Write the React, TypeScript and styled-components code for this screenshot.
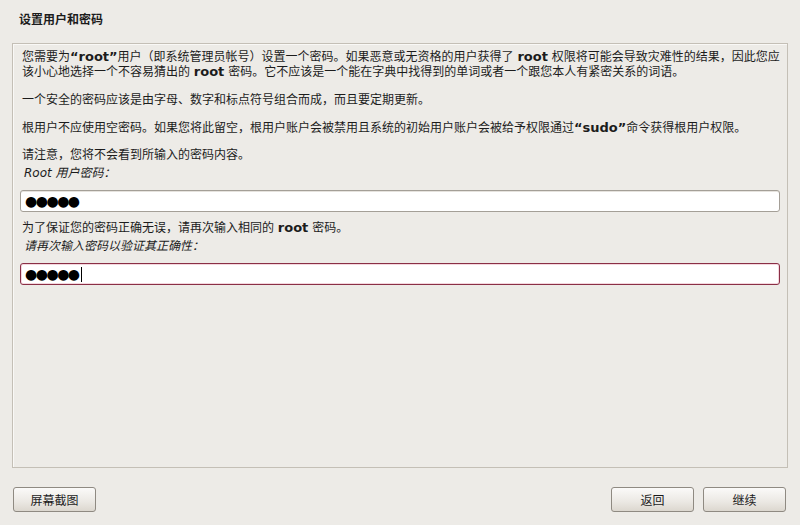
import styled, { createGlobalStyle } from "styled-components";

const GlobalStyle = createGlobalStyle`
  html, body {
    margin: 0;
    padding: 0;
    background: #edebe7;
  }
  * {
    box-sizing: border-box;
  }
`;

const Screen = styled.div`
  width: 800px;
  height: 525px;
  background: #edebe7;
  display: flex;
  flex-direction: column;
  font-family: "DejaVu Sans", "Noto Sans CJK SC", sans-serif;
  font-size: 12px;
  color: #1c1c1c;
  overflow: hidden;
`;

const Title = styled.div`
  height: 43px;
  padding: 10px 0 0 19px;
  font-weight: bold;
  font-size: 12px;
`;

const Panel = styled.div`
  margin: 0 12px;
  height: 425px;
  border: 1px solid #c4bfb6;
  box-shadow: inset 1px 1px 0 #f9f8f6;
  padding: 5px 7px 0 7px;
  display: flex;
  flex-direction: column;
`;

const Para = styled.div<{ $gap?: number }>`
  padding-left: 2px;
  line-height: 15px;
  margin-bottom: ${({ $gap }) => $gap}px;
  white-space: nowrap;
`;

const Line = styled.div`
  height: 15px;
`;

const Strong = styled.b`
  font-weight: bold;
  font-size: 13px;
  line-height: 15px;
`;

const Label = styled.div`
  padding-left: 4px;
  height: 15px;
  line-height: 15px;
  font-style: italic;
  margin-bottom: 9px;
`;

const Field = styled.div<{ $focus?: boolean }>`
  height: 22px;
  width: 760px;
  background: #fff;
  border: 1px solid ${({ $focus }) => ($focus ? "#8a2f46" : "#a49f97")};
  border-radius: 3px;
  box-shadow: ${({ $focus }) =>
    $focus ? "inset 0 0 0 1px #f4d7de" : "inset 0 1px 0 #e6e3de"};
  padding-left: 4px;
  display: flex;
  align-items: center;
  margin-bottom: 8px;
`;

const Dots = styled.span`
  font-size: 14px;
  letter-spacing: -1.5px;
  color: #000;
  line-height: 1;
`;

const Caret = styled.span`
  display: inline-block;
  width: 1px;
  height: 15px;
  background: #000;
  margin-left: 2px;
`;

const Footer = styled.div`
  display: flex;
  align-items: center;
  padding: 19px 14px 0 13px;
`;

const Spacer = styled.div`
  flex: 1;
`;

const Button = styled.button`
  width: 83px;
  height: 25px;
  border: 1px solid #8f8a82;
  border-radius: 3px;
  background: linear-gradient(#fbfaf9, #ebe8e3 60%, #dcd7cf);
  font-family: "DejaVu Sans", "Noto Sans CJK SC", sans-serif;
  font-size: 12px;
  color: #1c1c1c;
  padding: 0;
  & + & {
    margin-left: 9px;
  }
`;

export default function App() {
  return (
    <Screen>
      <GlobalStyle />
      <Title>设置用户和密码</Title>
      <Panel>
        <Para $gap={14}>
          <Line>
            您需要为<Strong>“root”</Strong>用户（即系统管理员帐号）设置一个密码。如果恶意或无资格的用户获得了 <Strong>root</Strong> 权限将可能会导致灾难性的结果，因此您应
          </Line>
          <Line>
            该小心地选择一个不容易猜出的 <Strong>root</Strong> 密码。它不应该是一个能在字典中找得到的单词或者一个跟您本人有紧密关系的词语。
          </Line>
        </Para>
        <Para $gap={12}>一个安全的密码应该是由字母、数字和标点符号组合而成，而且要定期更新。</Para>
        <Para $gap={12}>
          根用户不应使用空密码。如果您将此留空，根用户账户会被禁用且系统的初始用户账户会被给予权限通过<Strong>“sudo”</Strong>命令获得根用户权限。
        </Para>
        <Para $gap={3}>请注意，您将不会看到所输入的密码内容。</Para>
        <Label>Root 用户密码：</Label>
        <Field>
          <Dots>●●●●●</Dots>
        </Field>
        <Para $gap={3}>
          为了保证您的密码正确无误，请再次输入相同的 <Strong>root</Strong> 密码。
        </Para>
        <Label>请再次输入密码以验证其正确性：</Label>
        <Field $focus>
          <Dots>●●●●●</Dots>
          <Caret />
        </Field>
      </Panel>
      <Footer>
        <Button>屏幕截图</Button>
        <Spacer />
        <Button>返回</Button>
        <Button>继续</Button>
      </Footer>
    </Screen>
  );
}
